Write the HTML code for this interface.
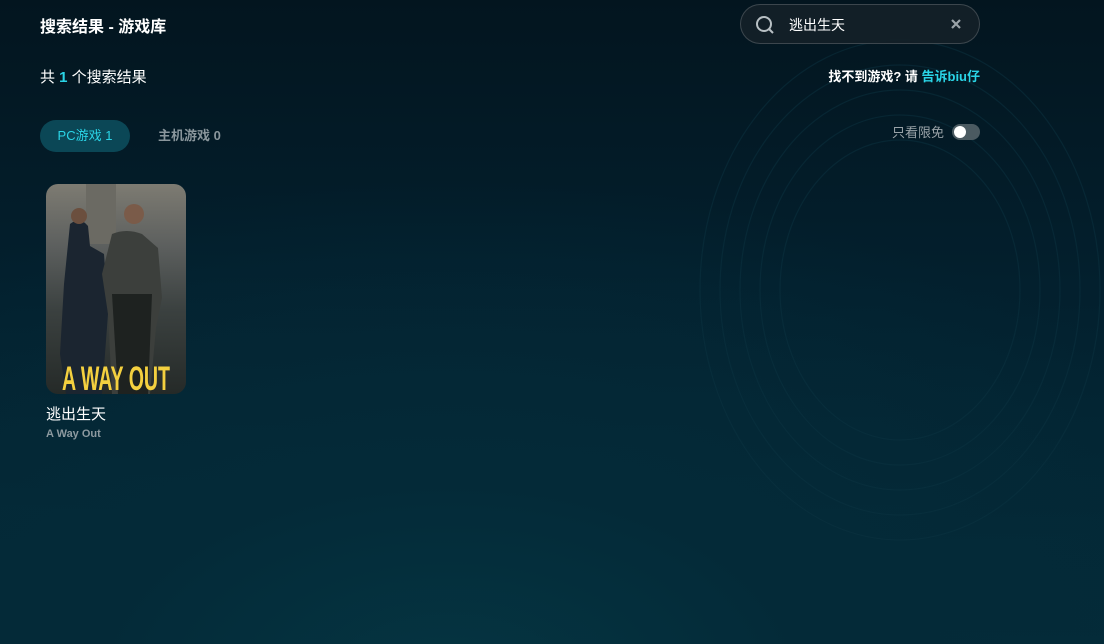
<!DOCTYPE html>
<html><head><meta charset="utf-8"><style>
*{margin:0;padding:0;box-sizing:border-box}
body{width:1104px;height:644px;overflow:hidden;position:relative;font-family:"Liberation Sans","Noto Sans CJK SC",sans-serif;
background:radial-gradient(ellipse 900px 500px at 450px 680px,#053542 0%,#042a38 40%,rgba(3,30,42,0) 100%),linear-gradient(180deg,#03151f 0%,#03202e 45%,#032c3a 100%);}
.abs{position:absolute}
.title{left:40px;top:13px;color:#fff;font-size:16px;font-weight:bold}
.count{left:40px;top:66px;color:#fff;font-size:15px}
.count b{color:#2ad4e6}
.search{left:740px;top:4px;width:240px;height:40px;border-radius:20px;background:rgba(20,32,40,.9);border:1px solid rgba(255,255,255,.18)}
.search .t{position:absolute;left:48px;top:10px;color:#fff;font-size:14px}
.tell{right:124px;top:66px;color:#fff;font-size:13px;font-weight:bold}
.tell span{color:#2ad4e6}
.tab1{left:40px;top:120px;width:90px;height:32px;border-radius:16px;background:#0b4756;color:#2ad4e6;font-size:13px;text-align:center;line-height:32px}
.tab2{left:158px;top:120px;line-height:32px;color:#8a969c;font-size:13px;font-weight:bold}
.free{left:892px;top:122px;color:#9aa3a8;font-size:13px}
.tog{left:952px;top:124px;width:28px;height:16px;border-radius:8px;background:#4b5a61}
.tog:after{content:"";position:absolute;left:2px;top:2px;width:12px;height:12px;border-radius:6px;background:#fff}
.card{left:46px;top:184px;width:140px;height:210px;border-radius:12px;overflow:hidden;
background:linear-gradient(180deg,#7d7b72 0%,#5c5f5e 30%,#3b4140 60%,#252a28 100%)}
.name{left:46px;top:403px;color:#fff;font-size:15px}
.en{left:46px;top:428px;color:#8d9aa0;font-size:11px;font-weight:bold}
</style></head><body>
<svg class="abs" style="left:560px;top:0" width="544" height="644" viewBox="0 0 544 644" fill="none" stroke="#0c3341" stroke-width="1.2" opacity=".5">
<ellipse cx="340" cy="290" rx="120" ry="150"/><ellipse cx="340" cy="290" rx="140" ry="175"/><ellipse cx="340" cy="290" rx="160" ry="200"/><ellipse cx="340" cy="290" rx="180" ry="225"/><ellipse cx="340" cy="290" rx="200" ry="250"/>
</svg>
<div class="abs title">搜索结果 - 游戏库</div>
<div class="abs count">共 <b>1</b> 个搜索结果</div>
<div class="abs search">
<svg class="abs" style="left:14px;top:10px" width="20" height="20" viewBox="0 0 20 20" fill="none" stroke="#b8c0c4" stroke-width="2"><circle cx="9" cy="9" r="7"/><path d="M14 14l4 4"/></svg>
<div class="t">逃出生天</div>
<svg class="abs" style="left:209px;top:13px" width="12" height="12" viewBox="0 0 12 12" stroke="#9aa3a8" stroke-width="2.2"><path d="M2 2l8 8M10 2l-8 8"/></svg>
</div>
<div class="abs tell">找不到游戏? 请 <span>告诉biu仔</span></div>
<div class="abs tab1">PC游戏 1</div>
<div class="abs tab2">主机游戏 0</div>
<div class="abs free">只看限免</div>
<div class="abs tog"></div>
<div class="abs card">
<svg width="140" height="210" viewBox="0 0 140 210">
<rect x="40" y="0" width="30" height="60" fill="#6b6a63"/>
<path d="M24 40q10-8 18 2l2 20 14 8 4 60-6 80H20l-6-40 4-70z" fill="#1b2530"/>
<circle cx="33" cy="32" r="8" fill="#6b4f3e"/>
<path d="M66 50q14-6 30 0l16 14 4 50-6 30-6 66H66l-4-80-6-40z" fill="#3c3f3c"/>
<circle cx="88" cy="30" r="10" fill="#7a5b49"/>
<path d="M66 110h40l-4 100H72z" fill="#1e2220"/>
<text x="70" y="206" text-anchor="middle" fill="#f4d03f" font-family="Liberation Sans" font-weight="bold" font-size="34" textLength="108" lengthAdjust="spacingAndGlyphs">A WAY OUT</text>
</svg>
</div>
<div class="abs name">逃出生天</div>
<div class="abs en">A Way Out</div>
</body></html>
